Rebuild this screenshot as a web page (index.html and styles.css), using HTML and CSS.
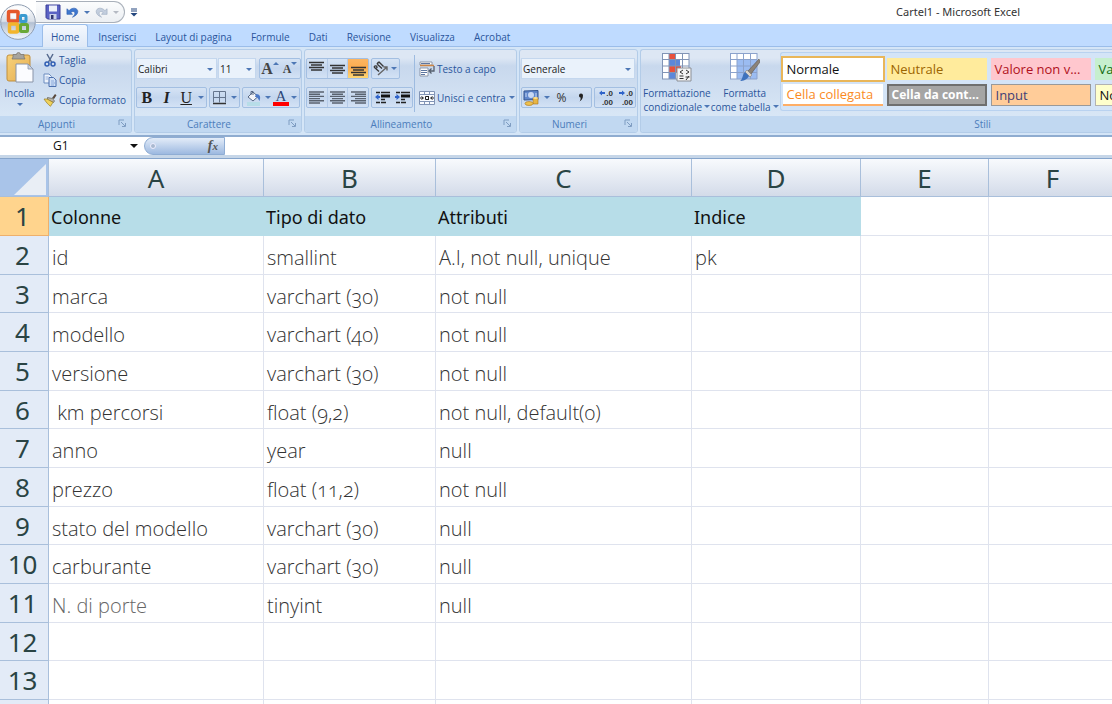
FILE: index.html
```html
<!DOCTYPE html>
<html lang="it">
<head>
<meta charset="utf-8">
<meta name="viewport" content="width=device-width, initial-scale=1">
<title>Cartel1 - Microsoft Excel</title>
<link rel="stylesheet" href="styles.css">
</head>
<body>
<svg class="defs" aria-hidden="true">
  <defs>
    <linearGradient id="orb" x1="0" y1="0" x2="0" y2="1"><stop offset="0" stop-color="#fff"/><stop offset=".48" stop-color="#d9dfe8"/><stop offset=".52" stop-color="#b3c0d3"/><stop offset="1" stop-color="#f3f8fd"/></linearGradient>
    <linearGradient id="gold" x1="0" y1="0" x2="1" y2="1"><stop offset="0" stop-color="#f7d27c"/><stop offset="1" stop-color="#e5ad50"/></linearGradient>
    <symbol id="launch" viewBox="0 0 8 8"><path d="M1 6V1h5" fill="none" stroke="#7f9dc2"/><path d="M3 3l4 4M7.500 4v3.500H4" fill="none" stroke="#7f9dc2"/></symbol>
  </defs>
</svg>

<header class="titlebar">
  <button class="office" aria-label="Pulsante Office">
    <svg viewBox="0 0 36 36" width="36" height="36"><circle cx="18" cy="18" r="17.300" fill="url(#orb)" stroke="#8e9cb0"/><ellipse cx="18" cy="9" rx="12" ry="6" fill="#fff" opacity=".7"/>
      <g fill="none" stroke-width="3.500"><rect x="8.500" y="7.500" width="9.500" height="9.500" rx="1" stroke="#e4582b"/><rect x="20.500" y="11.500" width="5.500" height="6" rx="1" stroke="#3b9bd0" stroke-width="3"/><rect x="9.500" y="20" width="8" height="8" rx="1" stroke="#f3b52c"/><rect x="20.500" y="20.500" width="7" height="7" rx="1" stroke="#69a836" stroke-width="3"/></g></svg>
  </button>
  <div class="quick">
    <button aria-label="Salva"><svg viewBox="0 0 16 16" width="16" height="16"><path d="M1 1h14v14H2.500L1 13.500z" fill="#5b62c4" stroke="#3c4199"/><path d="M4 1.500h8v6H4z" fill="#eef1fb"/><path d="M4.500 10h7v5h-7z" fill="#c9d0e8"/><path d="M6 11h2.500v4H6z" fill="#30356f"/></svg></button>
    <button aria-label="Annulla" class="undo"><svg viewBox="0 0 14 14" width="13" height="13"><path d="M1 3v6h6L5.300 7c2-2 4.700-1 4.200 1.400-.2 1.300-1.200 2.500-2.500 3.600 3.500-1.200 5.700-3.500 5.700-6C12.700 2 7 .8 3.300 5z" fill="#3f78cf" stroke="#2f5fae" stroke-width=".7"/></svg></button>
    <i class="caret"></i>
    <button aria-label="Ripeti" class="redo"><svg viewBox="0 0 14 14" width="13" height="13"><path d="M13 3v6H7l1.700-2c-2-2-4.700-1-4.200 1.400.2 1.300 1.200 2.500 2.500 3.600C3.500 10.800 1.300 8.500 1.300 6 1.300 2 7 .8 10.700 5z" fill="#c3cede" stroke="#9eabc0" stroke-width=".7"/></svg></button>
    <i class="caret pale"></i>
  </div>
  <button class="customise" aria-label="Personalizza barra"><svg viewBox="0 0 8 9" width="8" height="9"><path d="M1 1h6M1 3h6" stroke="#24477f" stroke-width="1"/><path d="M.5 5h7L4 8.500z" fill="#24477f"/></svg></button>
  <h1 class="caption">Cartel1 - Microsoft Excel</h1>
</header>

<nav class="tabs">
  <a href="#home" class="active">Home</a><a href="#ins">Inserisci</a><a href="#layout">Layout di pagina</a><a href="#form">Formule</a><a href="#dati">Dati</a><a href="#rev">Revisione</a><a href="#vis">Visualizza</a><a href="#acr">Acrobat</a>
</nav>

<main class="app">
<div class="ribbon">
  <section class="group g-clip">
    <div class="body">
      <button class="big paste">
        <svg viewBox="0 0 28 31" width="28" height="31"><rect x="1" y="3" width="23" height="26" rx="2" fill="url(#gold)" stroke="#c18f3c"/><path d="M7 5V2.500h3.500a2 2 0 014 0H18V5l1 2H6z" fill="#a7a49d" stroke="#77736b" stroke-width=".7"/><path d="M10 12h12l5 5v13H10z" fill="#fbfcff" stroke="#8994a8"/><path d="M22 12v5h5z" fill="#cbd5e6" stroke="#8994a8" stroke-width=".8"/></svg>
        <span>Incolla</span><i class="caret"></i>
      </button>
      <div class="stack">
        <button class="link"><svg viewBox="0 0 14 14" width="14" height="14"><path d="M4 1l4.500 8M10 1L5.500 9" stroke="#566a8f" stroke-width="1.500" fill="none"/><circle cx="4" cy="11" r="2" fill="none" stroke="#2f5db3" stroke-width="1.500"/><circle cx="10" cy="11" r="2" fill="none" stroke="#2f5db3" stroke-width="1.500"/></svg>Taglia</button>
        <button class="link"><svg viewBox="0 0 14 14" width="14" height="14"><path d="M1 1h5l2.500 2.500V10H1z" fill="#edf3fc" stroke="#6c8dc0"/><path d="M6 4.500h4.500L13 7v6.500H6z" fill="#cfdff6" stroke="#4b6fae"/><path d="M8 8h3M8 10h4M8 12h3M2.500 4h3M2.500 6h2.500" stroke="#6d92cf" stroke-width=".7"/></svg>Copia</button>
        <button class="link"><svg viewBox="0 0 14 14" width="14" height="14"><path d="M9 5l3-4 1.500 1.200L11 6z" fill="#59483c"/><path d="M4.500 4.500l5 1 2 2.500-1 1.500-6-3z" fill="#b9b3a7" stroke="#4e4b45" stroke-width=".6"/><path d="M1 6l3 0 6 3.300-2.500 4C5 11.500 3 9 1 6z" fill="#efd25c" stroke="#987d25" stroke-width=".7"/></svg>Copia formato</button>
      </div>
    </div>
    <h2>Appunti<svg class="launch"><use href="#launch"/></svg></h2>
  </section>

  <section class="group g-font">
    <div class="body rows">
      <div class="row">
        <div class="pair">
          <div class="combo font"><select aria-label="Tipo di carattere"><option>Calibri</option></select><i class="caret"></i></div>
          <div class="combo size"><select aria-label="Dimensione"><option>11</option></select><i class="caret"></i></div>
        </div>
        <div class="set"><button class="ser grow" aria-label="Ingrandisci">A<i class="up"></i></button><button class="ser shrink" aria-label="Riduci">A<i class="caret"></i></button></div>
      </div>
      <div class="row">
        <div class="set w70"><button class="ser bold">B</button><button class="ser ital">I</button><button class="ser und">U</button><i class="caret"></i></div>
        <div class="set w30"><button aria-label="Bordi"><svg viewBox="0 0 15 15" width="15" height="15"><path d="M1 13.500h13" stroke="#333" stroke-width="1.500"/><path d="M1.500 1.500h12v11M1.500 1.500v11M7.500 1.500v11M1.500 7.500h12" fill="none" stroke="#65758d"/></svg></button><i class="caret"></i></div>
        <div class="set w58"><button aria-label="Riempimento"><svg viewBox="0 0 15 16" width="15" height="16"><path d="M1 12h13v4H1z" fill="#b7dde8"/><path d="M2 7l5-5 5 4.500L7 11z" fill="#f3f5f9" stroke="#596a86"/><path d="M5 5V1.500h2V5" fill="none" stroke="#596a86"/><path d="M10 4c4 0 5 3 3.500 7C12 9 12 7 9 7z" fill="#4b79c8"/></svg></button><i class="caret"></i><button class="ser fontcolor" aria-label="Colore carattere">A</button><i class="caret"></i></div>
      </div>
    </div>
    <h2>Carattere<svg class="launch"><use href="#launch"/></svg></h2>
  </section>

  <section class="group g-align">
    <div class="body">
      <div class="rows">
        <div class="row">
          <div class="set w63"><button aria-label="In alto"><svg viewBox="0 0 15 15" width="15" height="15"><path d="M0 1.500h15M2 4h11M0 6.500h15M2 9h11" stroke="#333" stroke-width="1.300"/></svg></button><button aria-label="Al centro"><svg viewBox="0 0 15 15" width="15" height="15"><path d="M0 4.500h15M2 7h11M0 9.500h15M2 12h11" stroke="#333" stroke-width="1.300"/></svg></button><button class="on" aria-label="In basso"><svg viewBox="0 0 15 15" width="15" height="15"><path d="M0 6.500h15M2 9h11M0 11.500h15M2 14h11" stroke="#333" stroke-width="1.300"/></svg></button></div>
          <div class="set w28"><button aria-label="Orientamento"><svg viewBox="0 0 16 15" width="16" height="15"><path d="M5 14L14 6M10.500 6H14v3.500" fill="none" stroke="#666" stroke-width="1.400"/><path d="M1 6l5 4.500M1 6c1.500-2 3-1 3 .5L2.500 8M4 3l5 4.500M6 1l4.500 4.500M4 3c1-1.500 2-2 2.500-2" fill="none" stroke="#3a3a3a" stroke-width="1.400"/></svg></button><i class="caret"></i></div>
        </div>
        <div class="row">
          <div class="set w63"><button aria-label="A sinistra"><svg viewBox="0 0 15 13" width="15" height="13"><path d="M0 1h15M0 3.200h11M0 5.400h15M0 7.600h11M0 9.800h15M0 12h11" stroke="#59626f" stroke-width="1.400"/></svg></button><button aria-label="Centra"><svg viewBox="0 0 15 13" width="15" height="13"><path d="M0 1h15M2 3.200h11M0 5.400h15M2 7.600h11M0 9.800h15M2 12h11" stroke="#59626f" stroke-width="1.400"/></svg></button><button aria-label="A destra"><svg viewBox="0 0 15 13" width="15" height="13"><path d="M0 1h15M4 3.200h11M0 5.400h15M4 7.600h11M0 9.800h15M4 12h11" stroke="#59626f" stroke-width="1.400"/></svg></button></div>
          <div class="set w41"><button aria-label="Riduci rientro"><svg viewBox="0 0 15 13" width="15" height="13"><path d="M1 1.500h4M6 1.500h9M1 11.500h4M6 11.500h5M6 8.500h4" stroke="#222" stroke-width="1.300"/><path d="M6 5h9" stroke="#111" stroke-width="3"/><path d="M0 6l3.500-3v2H5v2H3.500v2z" fill="#2f63c9"/></svg></button><button aria-label="Aumenta rientro"><svg viewBox="0 0 15 13" width="15" height="13"><path d="M1 1.500h4M6 1.500h9M1 11.500h4M6 11.500h5M6 8.500h4" stroke="#222" stroke-width="1.300"/><path d="M6 5h9" stroke="#111" stroke-width="3"/><path d="M5 6L1.500 3v2H0v2h1.500v2z" fill="#2f63c9"/></svg></button></div>
        </div>
      </div>
      <div class="rows sided">
        <div class="row"><button class="link tight"><svg viewBox="0 0 16 16" width="16" height="16"><path d="M1 1h12v3H1zM1 7h8v8H1z" fill="#fff" stroke="#7c8797" stroke-width=".8"/><path d="M1 4.500h14" stroke="#ce8646" stroke-width="1.500"/><path d="M2 9.500h6M2 11.500h6M2 13.500h4M2 2.500h9" stroke="#5d76a0"/><path d="M15 5v5h-4M12.500 7.500L10 10l2.500 2.500" fill="none" stroke="#565f6d" stroke-width="1.300"/></svg>Testo a capo</button></div>
        <div class="row"><button class="link tight"><svg viewBox="0 0 16 14" width="16" height="14"><path d="M.5.500h15v13H.5z" fill="#f8fbff" stroke="#8194b5"/><path d="M.5 3.500h15M.5 10.500h15M5.500.500v3M10.500.500v3M5.500 10.500v3M10.500 10.500v3" stroke="#8194b5"/><path d="M1 7h3M12 7h3M2.500 5.500L4.500 7l-2 1.500M13.500 5.500L11.500 7l2 1.500" stroke="#222" fill="none"/><path d="M6.500 5.500h3v3h-3zM9.500 5v4" fill="none" stroke="#222"/></svg>Unisci e centra<i class="caret"></i></button></div>
      </div>
    </div>
    <h2>Allineamento<svg class="launch"><use href="#launch"/></svg></h2>
  </section>

  <section class="group g-num">
    <div class="body rows">
      <div class="row"><div class="combo number"><select aria-label="Formato numero"><option>Generale</option></select><i class="caret"></i></div></div>
      <div class="row">
        <div class="set w70"><button aria-label="Formato contabilità"><svg viewBox="0 0 17 16" width="17" height="16"><path d="M1 1l14-.5v9L1 10z" fill="#5f86cb" stroke="#34558f"/><ellipse cx="8" cy="5" rx="3" ry="3" fill="#c7d8f4"/><path d="M3 3v4M13 3v4" stroke="#c7d8f4"/><path d="M10 8h5v6h-5z" fill="#e7b644" stroke="#a8741f" stroke-width=".6"/><ellipse cx="12.500" cy="8" rx="2.500" ry="1" fill="#ffe08a"/><ellipse cx="6" cy="13.500" rx="4" ry="2" fill="#efc24f" stroke="#a8741f" stroke-width=".6"/></svg></button><i class="caret"></i><button class="pct">%</button><button aria-label="Stile separatore"><svg viewBox="0 0 6 9" width="6" height="9"><path d="M1 2.500a2 2 0 114 0C5 5.500 3.500 7.500 1.500 8.500c1-1.500 1.300-2.500 1-4C1.500 4.500 1 3.500 1 2.500z" fill="#222"/></svg></button></div>
        <div class="set w41 dec">
          <button aria-label="Aumenta decimali"><span><svg viewBox="0 0 6 6" width="6" height="6"><path d="M0 3l3-2.500V2h3v2H3v1.500z" fill="#2f63c9"/></svg>.0</span><span>.00</span></button>
          <button aria-label="Diminuisci decimali"><span><svg viewBox="0 0 6 6" width="6" height="6"><path d="M6 3L3 .5V2H0v2h3v1.500z" fill="#2f63c9"/></svg>.0</span><span>.00</span></button>
        </div>
      </div>
    </div>
    <h2>Numeri<svg class="launch"><use href="#launch"/></svg></h2>
  </section>

  <section class="group g-style">
    <div class="body">
      <button class="big fmt">
        <svg viewBox="0 0 31 30" width="31" height="30"><path d="M1 1h27v26H1z" fill="#fff"/><path d="M8 1h6v6H8zM8 14h12v6H8z" fill="#e8513c"/><path d="M8 7h11v7H8zM8 20h6v7H8z" fill="#5c87da"/><path d="M1.500 1v26M8 1v26M14.500 1v26M21.500 1v26M28 1v26M1 1.500h27M1 7.500h27M1 14h27M1 20.500h27M1 27h27" stroke="#8194b6" stroke-width="1" fill="none"/><path d="M16 16h14v13H16z" fill="#f4f4f4" stroke="#8b8f96"/><path d="M22 18l-3 2 3 2M18.500 24h4M18.500 26.500h4M25 18l3 2-3 2M28 24l-3 4M24.500 25h4" stroke="#333" fill="none"/></svg>
        <span>Formattazione<br>condizionale<i class="caret"></i></span>
      </button>
      <button class="big fmt">
        <svg viewBox="0 0 31 30" width="31" height="30"><path d="M1 1h27v26H1z" fill="#fff"/><path d="M8 7h20v20H8z" fill="#9bbcf2"/><path d="M1.500 1v26M8 1v26M14.500 1v26M21.500 1v26M28 1v26M1 1.500h27M1 7.500h27M1 14h27M1 20.500h27M1 27h27" stroke="#8ba2cc" fill="none"/><path d="M30 7L19 19l3 3 9-12z" fill="#8c8379" stroke="#5d564f" stroke-width=".6"/><path d="M18 18l5 5-2 2-5-5z" fill="#ddd5cb" stroke="#7d756c" stroke-width=".5"/><path d="M16 20l4 4c-2 4-6 5-9 5 3-2 2-6 5-9z" fill="#3f72bd"/></svg>
        <span>Formatta<br>come tabella<i class="caret"></i></span>
      </button>
      <div class="gallery">
        <button class="s-normal">Normale</button><button class="s-neutral">Neutrale</button><button class="s-bad">Valore non v...</button><button class="s-good">Valore valido</button>
        <button class="s-linked">Cella collegata</button><button class="s-check">Cella da cont...</button><button class="s-input">Input</button><button class="s-note">Nota</button>
      </div>
    </div>
    <h2>Stili</h2>
  </section>
</div>

<div class="formula">
  <div class="namebox"><input aria-label="Casella nome" value="G1"><i class="caret black"></i></div>
  <button class="fx" aria-label="Inserisci funzione"><i class="dot"></i><span><i>f</i><i class="x">x</i></span></button>
  <input class="entry" aria-label="Barra della formula">
</div>

<div class="sheet">
<table>
  <colgroup><col class="c0"><col class="cA"><col class="cB"><col class="cC"><col class="cD"><col class="cE"><col class="cE"><col></colgroup>
  <thead><tr><th class="corner" aria-label="Seleziona tutto"><svg viewBox="0 0 32 31" width="32" height="31"><path d="M32 0v31H0z" fill="#e9eef5"/></svg></th><th>A</th><th>B</th><th>C</th><th>D</th><th>E</th><th>F</th><th></th></tr></thead>
  <tbody>
    <tr class="head"><th class="sel">1</th><td>Colonne</td><td>Tipo di dato</td><td>Attributi</td><td>Indice</td><td></td><td></td><td></td></tr>
    <tr><th>2</th><td>id</td><td>smallint</td><td>A.I, not null, unique</td><td>pk</td><td></td><td></td><td></td></tr>
    <tr><th>3</th><td>marca</td><td>varchart (30)</td><td>not null</td><td></td><td></td><td></td><td></td></tr>
    <tr><th>4</th><td>modello</td><td>varchart (40)</td><td>not null</td><td></td><td></td><td></td><td></td></tr>
    <tr><th>5</th><td>versione</td><td>varchart (30)</td><td>not null</td><td></td><td></td><td></td><td></td></tr>
    <tr><th>6</th><td>&nbsp;km percorsi</td><td>float (9,2)</td><td>not null, default(0)</td><td></td><td></td><td></td><td></td></tr>
    <tr><th>7</th><td>anno</td><td>year</td><td>null</td><td></td><td></td><td></td><td></td></tr>
    <tr><th>8</th><td>prezzo</td><td>float (11,2)</td><td>not null</td><td></td><td></td><td></td><td></td></tr>
    <tr><th>9</th><td>stato del modello</td><td>varchart (30)</td><td>null</td><td></td><td></td><td></td><td></td></tr>
    <tr><th>10</th><td>carburante</td><td>varchart (30)</td><td>null</td><td></td><td></td><td></td><td></td></tr>
    <tr><th>11</th><td class="soft">N. di porte</td><td>tinyint</td><td>null</td><td></td><td></td><td></td><td></td></tr>
    <tr><th>12</th><td></td><td></td><td></td><td></td><td></td><td></td><td></td></tr>
    <tr><th>13</th><td></td><td></td><td></td><td></td><td></td><td></td><td></td></tr>
    <tr><th></th><td></td><td></td><td></td><td></td><td></td><td></td><td></td></tr>
  </tbody>
</table>
</div>
</main>
</body>
</html>
```
FILE: styles.css
```css
* { box-sizing: border-box; }
body {
  margin: 0; height: 100vh; overflow: hidden;
  display: flex; flex-direction: column;
  font: 10px/14px "Open Sans", "Noto Sans", sans-serif;
  color: #2a559c; background: #fff;
}
button, input, select { font: inherit; color: inherit; border: 0; background: none; padding: 0; margin: 0; outline: 0; }
button { display: flex; align-items: center; justify-content: center; white-space: nowrap; }
svg { display: block; flex: none; }
h1, h2 { margin: 0; font-weight: 400; }
.defs { position: absolute; width: 0; height: 0; }

.caret, .up { flex: none; display: inline-block; width: 0; height: 0; border: solid transparent; border-width: 3px 3px 0; border-top-color: #4d77b5; }
.up { border-width: 0 3px 3px; border-bottom-color: #4d77b5; }
.caret.pale { border-top-color: #b5bac3; }
.caret.black { border-width: 4px 4px 0; border-top-color: #111; }

/* title bar */
.titlebar { position: relative; flex: none; display: flex; align-items: center; height: 24px; padding-left: 36px; }
.office { position: absolute; z-index: 2; left: 0; top: 4px; }
.quick { display: flex; align-items: center; gap: 5px; height: 22px; width: 89px; padding-left: 9px; border: 1px solid #a9b0ba; border-left: 0; border-radius: 0 11px 11px 0; background: linear-gradient(#fbfcfd, #eceff3); }
.customise { margin-left: 5px; }
.caption { margin-left: auto; padding-right: 92px; font-family: "Noto Sans", sans-serif; font-size: 11px; color: #333; }

/* tabs */
.tabs { display: flex; flex: none; height: 23px; padding-left: 42px; background: #bfdbff; border-bottom: 1px solid #9bbde9; }
.tabs a { padding: 6px 10px 0 9px; color: #2a559c; text-decoration: none; }
.tabs a.active { padding: 5px 8px 0; margin-right: 1px; height: 23px; border: 1px solid #9bbde9; border-bottom: 0; border-radius: 3px 3px 0 0; background: linear-gradient(#f4f8fe, #dfe9f7); }

.app { flex: 1; min-height: 0; display: flex; flex-direction: column; }

/* ribbon */
.ribbon { flex: none; display: flex; gap: 2px; height: 89px; padding: 2px 0; background: #d4e5f7; border-bottom: 2px solid #8facd0; overflow: hidden; }
.group { flex: none; display: flex; flex-direction: column; border: 1px solid #b3cce8; border-radius: 3px; background: linear-gradient(#dde7f4 0, #dde7f4 8px, #c8d8ed 16px, #d9e7f6 68px); overflow: hidden; }
.group h2 { position: relative; flex: none; height: 16px; font-size: 10px; line-height: 17px; text-align: center; color: #4c7dbb; background: #c1d8f1; padding-right: 18px; }
.launch { position: absolute; right: 5px; top: 3px; width: 8px; height: 8px; }
.ribbon { height: 90px; }
.body { flex: 1; display: flex; }
.g-clip { width: 132px; border-left: 0; border-radius: 0 3px 3px 0; }
.g-font { width: 168px; }
.g-align { width: 213px; }
.g-num { width: 119px; }
.g-style { flex: 1 0 460px; border-right: 0; border-radius: 3px 0 0 3px; }
.g-style h2 { padding-left: 212px; padding-right: 0; }

.big { flex-direction: column; }
.paste { width: 39px; justify-content: flex-start; padding-top: 2px; gap: 3px; }
.stack { display: flex; flex-direction: column; gap: 6px; padding: 3px 0 0 4px; }
.link { gap: 2px; justify-content: flex-start; }
.tight .caret { margin-left: 1px; }
.rows { display: flex; flex-direction: column; gap: 8px; padding: 8px 0 0 1px; }
.row { display: flex; gap: 2px; height: 21px; }
.pair { display: flex; gap: 1px; margin-right: 1px; }
.combo { position: relative; height: 21px; color: #222; background: #eaf2fb; border: 1px solid #c4d7ee; }
.combo select { appearance: none; width: 100%; height: 100%; padding-left: 1px; }
.combo .caret { position: absolute; right: 3px; top: 9px; pointer-events: none; }
.font { width: 81px; }
.size { width: 38px; }
.number { width: 114px; }
.set { display: flex; align-items: center; height: 21px; border: 1px solid #a3bfe2; border-radius: 2px; background: linear-gradient(#d5e3f4, #c4d6ee 50%, #d3e2f5); }
.set button { flex: 1; height: 100%; }
.set > .caret { margin: 0 2px; }
.w70 { width: 71px; } .w30 { width: 31px; } .w58 { width: 58px; }
.w63 { width: 63px; } .w28 { width: 29px; } .w41 { width: 42px; }
.w63 button + button { border-left: 1px solid #b5cbe8; }
.set button.on { background: linear-gradient(#fcb562, #fbac50 45%, #fed773); }
.ser { font-family: "Liberation Serif", serif; color: #222; }
.bold, .ital, .und { font-size: 16px; }
.bold { font-weight: 700; }
.ital { font-style: italic; font-weight: 700; }
.und { text-decoration: underline; }
.grow, .shrink { width: 20px; align-items: center; font-weight: 700; font-size: 16px; color: #444; }
.shrink { font-size: 12px; }
.grow i, .shrink i { margin-bottom: 10px; }
.set .fontcolor { flex: none; width: 16px; height: 17px; font-size: 15px; line-height: 12px; color: #2c4779; border-bottom: 4px solid #f00; }
.pct { font-size: 12px; color: #333; }
.dec button { flex-direction: column; align-items: flex-end; padding-right: 2px; font: 700 8px/9px "Liberation Sans", sans-serif; color: #333; }
.dec span { display: flex; align-items: center; gap: 1px; height: 9px; }
.sided { margin: 5px 0 4px 1px; padding: 3px 0 0 4px; border-left: 1px solid #9dbbe0; }

.fmt { width: 70px; justify-content: flex-start; padding-top: 2px; gap: 4px; }
.fmt .caret { margin: 0 0 3px 2px; }
.g-style .body { padding-left: 2px; }
.gallery { display: grid; grid-template-columns: repeat(4, 100px); grid-auto-rows: 22px; gap: 4px; margin: 2px 0 5px 1px; padding: 5px 2px 4px; border: 1px solid #b9d2f0; border-right: 0; border-radius: 3px 0 0 3px; background: #d4e4f7; flex: 1; }
.gallery button { justify-content: flex-start; padding-left: 4px; font-size: 13px; overflow: hidden; }
.gallery .s-normal { color: #111; background: #fff; outline: 2px solid #e9b659; }
.s-neutral { color: #9c6500; background: #ffeb9c; }
.s-bad { color: #b01020; background: #ffc7ce; }
.s-good { color: #106b10; background: #c6efce; }
.s-linked { color: #fa8a1e; background: #fff; border-bottom: 2px solid #ffae66; }
.gallery .s-check { color: #fff; background: #a5a5a5; border: 2px solid #6f6f6f; font-weight: 700; font-size: 12px; padding-left: 3px; }
.s-input { color: #3f3f76; background: #ffcc99; border: 1px solid #999; }
.s-note { color: #111; background: #ffffcc; border: 1px solid #b2b2b2; }

/* formula bar */
.formula { flex: none; display: flex; height: 22px; padding-bottom: 3px; background: linear-gradient(#fff 18px, #c6d6e8 18px); border-bottom: 1px solid #86a5cc; }
.namebox { display: flex; align-items: center; width: 144px; padding: 0 6px 0 53px; background: #fff; }
.namebox input { flex: 1; min-width: 0; font-size: 12px; color: #111; }
.fx { width: 81px; justify-content: space-between; padding: 0 6px 0 5px; border: 1px solid #8fadd4; border-radius: 10px 0 0 10px; background: linear-gradient(#e3ecf8, #9db9e0); }
.fx span { font: 700 14px/16px "Liberation Serif", serif; color: #555; }
.fx .x { font-size: 11px; }
.dot { width: 6px; height: 6px; border-radius: 3px; background: #a9b9d0; border: 1px solid #eef; }
.entry { flex: 1; background: #fff; }

/* worksheet */
.sheet { flex: 1; min-height: 0; overflow: hidden; }
table { width: 100%; min-width: 1117px; table-layout: fixed; border-collapse: separate; border-spacing: 0; }
.c0 { width: 49px; } .cA { width: 215px; } .cB { width: 172px; } .cC { width: 256px; } .cD { width: 169px; } .cE { width: 128px; }
th, td { height: 39px; padding: 0; border: solid #dfe3ee; border-width: 0 1px 1px 0; white-space: nowrap; }
tbody tr:nth-child(3n) > * { height: 38px; }
th { font: 400 26px/34px "Noto Sans", "Open Sans", sans-serif; color: #2a4444; }
thead th { height: 38px; border-color: #a9bfdb; background: linear-gradient(#f8fafd, #d3dbe9); }
tbody th { padding-right: 3px; background: #e3ebf7; border-color: #a9bfdb; }
thead .corner { background: #a9c4e9; }
.corner svg { margin: 3px 2px 0 auto; }
tbody .sel { background: #ffd48d; border-color: #eeb06c; }
td { padding: 6px 0 0 3px; font: 300 20px/28px "Open Sans", "Noto Sans", sans-serif; font-feature-settings: "onum"; color: #333; }
.head td { padding: 1px 0 0 2px; font: 400 18px/28px "Noto Sans", "Open Sans", sans-serif; color: #111; }
.head td:nth-child(-n+5) { background: #b7dde8; border-color: #b7dde8; }
td.soft { color: #666; }
```
